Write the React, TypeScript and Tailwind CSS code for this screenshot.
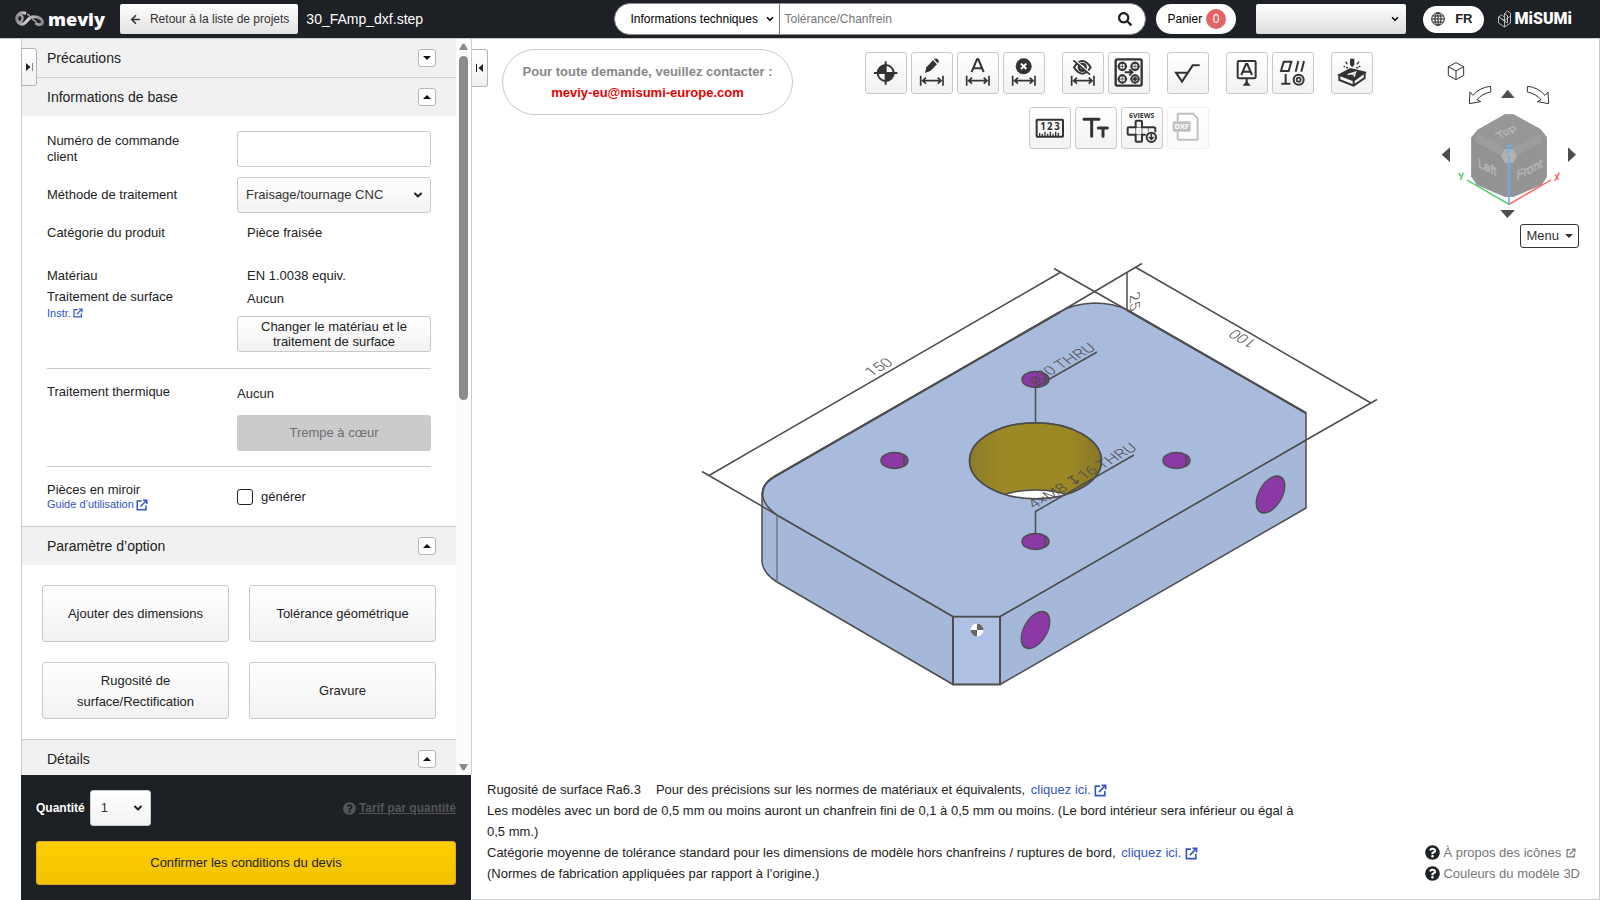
import { useState } from "react";
import type { ReactNode } from "react";
import { ArrowLeft, ChevronDown } from "lucide-react";
import { FaQuestionCircle, FaSearch } from "react-icons/fa";

const INK = "#333";

const ExternalIcon = ({ className }: { className: string }) => (
  <svg viewBox="0 0 24 24" className={className} fill="none" stroke="currentColor" strokeWidth="3" aria-hidden="true">
    <path d="M11 4H2.500V21.500H20V13" />
    <path d="M9 15L20 4" />
    <path d="M14 2.500H21.500V10" />
  </svg>
);

const MeviyLogo = () => (
  <a href="#home" className="flex items-center gap-1 text-white">
    <svg width="29" height="16" viewBox="0 0 29 16" fill="none" aria-hidden="true">
      <defs>
        <linearGradient id="swirl" x1="0" y1="0" x2="1" y2="0">
          <stop offset="0" stopColor="#8f8a8d" />
          <stop offset="0.4" stopColor="#d8d4d6" />
          <stop offset="1" stopColor="#8c8789" />
        </linearGradient>
      </defs>
      <path
        d="M11 2.500C6 .5 1.500 3.500 1.800 8C2 12 6.500 14.500 9.500 12.200C13 9.500 14 5.500 19 5.800C24 5.800 28 8.500 27.400 11.500C26.800 14.500 22.500 14 20.500 12"
        stroke="url(#swirl)"
        strokeWidth="3"
      />
      <path d="M4 4.500C6 3 8 5 7.500 8C7 10.500 5 11.500 3.200 11" stroke="#a29da0" strokeWidth="2.500" />
      <path d="M12 3C15 4 17 9 21.500 11" stroke="#aaa5a8" strokeWidth="1.500" />
    </svg>
    <span className="font-['Open_Sans',sans-serif] text-lg leading-6 font-extrabold">meviy</span>
  </a>
);

const Header = () => (
  <header className="flex h-[39px] shrink-0 items-center border-b border-[#c9cbd0] bg-[#1d2025] pr-7 pl-[15px] text-xs">
    <MeviyLogo />
    <button className="ml-[15px] flex h-[30px] items-center gap-2 rounded-[2px] bg-linear-to-b from-white to-[#e2e2e2] px-[9px] text-[#333]">
      <ArrowLeft size={13} strokeWidth={3} />
      Retour à la liste de projets
    </button>
    <span className="ml-2 text-sm text-white">30_FAmp_dxf.step</span>

    <form className="ml-auto flex h-8 w-[532px] items-center rounded-full border border-[#8a8a8a] bg-white" role="search">
      <div className="relative h-full border-r border-[#777]">
        <select aria-label="Type de recherche" className="h-full appearance-none rounded-l-full pr-[21px] pl-[15px] text-black">
          <option>Informations techniques</option>
        </select>
        <ChevronDown size={10} strokeWidth={4} className="pointer-events-none absolute top-1/2 right-1 -translate-y-1/2" />
      </div>
      <input
        aria-label="Rechercher"
        placeholder="Tolérance/Chanfrein"
        className="h-full min-w-0 flex-1 px-1 text-xs outline-none placeholder:text-[#757575]"
      />
      <button type="button" aria-label="Lancer la recherche" className="pr-[13px] pl-2 text-[#222]">
        <FaSearch size={14} />
      </button>
    </form>
    <a href="#panier" className="ml-2.5 flex h-[30px] items-center gap-1 rounded-full bg-white pr-2.5 pl-[11px] text-black">
      Panier
      <span className="flex size-5 items-center justify-center rounded-full bg-[#e06464] text-white">0</span>
    </a>
    <div className="relative ml-5 w-[150px]">
      <select aria-label="Compte" className="h-[30px] w-full appearance-none rounded-[2px] bg-linear-to-b from-white to-[#dcdcdc] px-2">
        <option></option>
      </select>
      <ChevronDown size={10} strokeWidth={4} className="pointer-events-none absolute top-1/2 right-1.5 -translate-y-1/2" />
    </div>
    <button className="ml-[17px] flex h-[27px] items-center gap-2.5 rounded-full bg-white pr-[11px] pl-2 text-[13px] font-bold text-[#222]">
      <svg width="14" height="14" viewBox="0 0 14 14" fill="none" stroke="#222" aria-hidden="true">
        <circle cx="7" cy="7" r="6.300" />
        <ellipse cx="7" cy="7" rx="3" ry="6.300" />
        <path d="M7 1V13M1 7H13M1.800 4H12.200M1.800 10H12.200" />
      </svg>
      FR
    </button>
    <a href="#misumi" className="ml-3.5 flex items-center gap-1 text-white">
      <svg width="13" height="18" viewBox="0 0 13 18" fill="none" stroke="#ddd" strokeWidth="0.8" aria-hidden="true">
        <path d="M6.500 17L.5 13V7L6.500 10.500ZM6.500 17L12.500 13V3L9.500 1L6.500 3.500V10.500L12.500 6M.5 7L3.500 5L6.500 7M6.500 3.500L9.500 5.500V13L3.500 9" />
      </svg>
      <span className="font-[Roboto,sans-serif] text-base leading-5 font-black">MiSUMi</span>
    </a>
  </header>
);

type SectionProps = { title: string; open?: boolean; border?: boolean };

const SectionHeader = ({ title, open = true, border = true }: SectionProps) => (
  <div className={border ? "border-t border-[#cbccd0]" : ""}>
    <h2 className="flex h-[38px] items-center justify-between bg-[#f1f1f1] pr-5 pl-[25px] text-sm text-[#222]">
      {title}
      <button
        aria-label={title}
        aria-expanded={open}
        className="flex size-[18px] items-center justify-center rounded-[3px] border border-[#b5b5b5] bg-white"
      >
        <svg width="8" height="4" viewBox="0 0 8 4" fill="#111" aria-hidden="true">
          <path d={open ? "M0 4L4 0L8 4Z" : "M0 0H8L4 4Z"} />
        </svg>
      </button>
    </h2>
  </div>
);

const buttonStyle = "rounded-[3px] border border-[#c8c9cd] bg-linear-to-b from-white to-[#f2f2f2]";

const optionButtons = ["Ajouter des dimensions", "Tolérance géométrique", "Rugosité de surface/Rectification", "Gravure"];

const BasicInfo = () => {
  const [mirror, setMirror] = useState(false);
  return (
    <div className="px-[25px] pt-[15px] pb-3.5 leading-4">
      <div className="grid grid-cols-[190px_1fr] items-center">
        <label htmlFor="order" className="w-36">
          Numéro de commande client
        </label>
        <input id="order" className="h-9 w-full rounded-[3px] border border-[#c8c8c8] bg-white px-2" />
      </div>
      <div className="mt-2.5 grid grid-cols-[190px_1fr] items-center">
        <label htmlFor="method">Méthode de traitement</label>
        <div className="relative">
          <select id="method" className={`h-9 w-full appearance-none pl-2 text-[#333] ${buttonStyle}`}>
            <option>Fraisage/tournage CNC</option>
          </select>
          <ChevronDown size={12} strokeWidth={4} className="pointer-events-none absolute top-3 right-[7px]" />
        </div>
      </div>
      <div className="mt-3 grid grid-cols-[200px_1fr]">
        <span>Catégorie du produit</span>
        <span>Pièce fraisée</span>
      </div>
      <div className="mt-[27px] grid grid-cols-[200px_1fr]">
        <span>Matériau</span>
        <span>EN 1.0038 equiv.</span>
      </div>
      <div className="mt-[5px] grid grid-cols-[190px_1fr]">
        <div>
          <p>Traitement de surface</p>
          <a href="#instr" className="flex items-center gap-0.5 text-[11px] text-[#3355c8]">
            Instr. <ExternalIcon className="size-2.5" />
          </a>
        </div>
        <div>
          <p className="pt-0.5 pl-2.5">Aucun</p>
          <button className={`mt-[9px] h-9 w-full px-4 leading-[15px] ${buttonStyle}`}>
            Changer le matériau et le traitement de surface
          </button>
        </div>
      </div>
      <hr className="mt-4 border-[#c9c9c9]" />
      <div className="mt-[15px] grid grid-cols-[190px_1fr]">
        <span>Traitement thermique</span>
        <div>
          <p className="pt-0.5">Aucun</p>
          <button disabled className="mt-[13px] h-9 w-full rounded-[3px] bg-[#cbcbcb] text-[#6b6e75]">
            Trempe à cœur
          </button>
        </div>
      </div>
      <hr className="mt-[15px] border-[#c9c9c9]" />
      <div className="mt-[15px] grid grid-cols-[190px_1fr] items-center">
        <div className="leading-[15px]">
          <p>Pièces en miroir</p>
          <a href="#guide" className="flex items-center gap-0.5 text-[11px] text-[#3355c8]">
            Guide d’utilisation <ExternalIcon className="size-3" />
          </a>
        </div>
        <label className="flex items-center gap-2">
          <input
            type="checkbox"
            checked={mirror}
            onChange={() => setMirror(!mirror)}
            className="size-4 appearance-none rounded-[3px] border border-[#222] bg-white checked:bg-[#222]"
          />
          générer
        </label>
      </div>
    </div>
  );
};

const SidePanel = () => (
  <aside className="relative flex w-[451px] shrink-0 flex-col text-[13px] text-[#222]">
    <div className="flex min-h-0 flex-1 border-x border-[#cbccd0]">
      <div className="min-w-0 flex-1 overflow-hidden">
        <SectionHeader title="Précautions" open={false} border={false} />
        <SectionHeader title="Informations de base" />
        <BasicInfo />
        <SectionHeader title="Paramètre d’option" />
        <div className="grid grid-cols-2 gap-5 p-5">
          {optionButtons.map((label) => (
            <button key={label} className={`h-[57px] px-6 leading-[21px] ${buttonStyle}`}>
              {label}
            </button>
          ))}
        </div>
        <SectionHeader title="Détails" />
      </div>
      <div className="flex w-[15px] flex-col items-center justify-between bg-[#fcfcfc] py-1" aria-hidden="true">
        <svg width="9" height="7" viewBox="0 0 9 7" fill="#8b8b8b">
          <path d="M0 7L3.500 .8H5.500L9 7Z" />
        </svg>
        <div className="mt-1.5 h-[344px] w-[9px] rounded-full bg-[#8b8b8b]" />
        <div className="flex-1" />
        <svg width="9" height="7" viewBox="0 0 9 7" fill="#8b8b8b">
          <path d="M0 0H9L5.500 6.200H3.500Z" />
        </svg>
      </div>
    </div>
    <div className="mr-px bg-[#1d2025] px-[15px] py-[15px]">
      <div className="flex items-center text-white">
        <label htmlFor="qty" className="text-xs font-bold">
          Quantité
        </label>
        <div className="relative ml-[5px]">
          <select id="qty" className={`h-9 w-[61px] appearance-none pl-2.5 text-[#333] ${buttonStyle}`}>
            <option>1</option>
          </select>
          <ChevronDown size={12} strokeWidth={4} className="pointer-events-none absolute top-3 right-[7px] text-[#222]" />
        </div>
        <a href="#tarif" className="ml-auto flex items-center gap-[3px] text-xs font-bold text-[#555]">
          <FaQuestionCircle size={13} />
          <span className="underline">Tarif par quantité</span>
        </a>
      </div>
      <button className="mt-[15px] h-11 w-full rounded-[3px] border border-[#e0a92c] bg-linear-to-b from-[#ffcf00] to-[#f2c200]">
        Confirmer les conditions du devis
      </button>
    </div>
    <button
      aria-label="Déplier le panneau"
      className="absolute top-[9px] left-0 flex h-[38px] w-4 items-center justify-center rounded-r-[3px] border border-[#b5b5b5] bg-linear-to-b from-white to-[#f2f2f2]"
    >
      <svg width="7" height="8" viewBox="0 0 7 8" aria-hidden="true">
        <path d="M0 0L4.500 4L0 8Z" fill="#222" />
        <path d="M6.500 0V8" stroke="#888" />
      </svg>
    </button>
    <button
      aria-label="Replier le panneau"
      className="absolute top-2.5 left-full flex h-[38px] w-4 items-center justify-center rounded-r-[3px] border border-l-0 border-[#b5b5b5] bg-linear-to-b from-white to-[#f2f2f2]"
    >
      <svg width="7" height="8" viewBox="0 0 7 8" aria-hidden="true">
        <path d="M7 0L2.500 4L7 8Z" fill="#222" />
        <path d="M.5 0V8" stroke="#222" />
      </svg>
    </button>
  </aside>
);

/* Double arrow shared by the dimension tools */
const DimArrow = () => (
  <path d="M29 71V101M96 71V101M35 86H90M45 77L35 86L45 95M80 77L90 86L80 95" strokeWidth="5" />
);

type Tool = { name: string; icon: ReactNode; disabled?: boolean };

const toolRows: Tool[][][] = [
  [
    [
      {
        name: "Origine",
        icon: (
          <>
            <circle cx="62" cy="63" r="24" />
            <path d="M62 28V98M27 63H97" strokeWidth="6" />
            <path d="M62 63V39A24 24 0 0 0 38 63ZM62 63V87A24 24 0 0 0 86 63Z" fill={INK} stroke="none" />
          </>
        ),
      },
      {
        name: "Modifier la cote",
        icon: (
          <>
            <path d="M42 63L46 46L66 25L78 37L58 57Z" fill={INK} stroke="none" />
            <path d="M69 22L72 20Q77 18 82 23Q85 28 82 32L80 34Z" fill={INK} stroke="none" />
            <DimArrow />
          </>
        ),
      },
      {
        name: "Cote automatique",
        icon: (
          <>
            <path d="M44 60L60 22H64L80 60M49 49H75" />
            <DimArrow />
          </>
        ),
      },
      {
        name: "Supprimer la cote",
        icon: (
          <>
            <circle cx="62" cy="43" r="24" fill={INK} stroke="none" />
            <path d="M54 35L70 51M70 35L54 51" stroke="#fff" strokeWidth="6" />
            <DimArrow />
          </>
        ),
      },
    ],
    [
      {
        name: "Masquer les cotes",
        icon: (
          <>
            <path d="M36 46Q48 27 61 27Q74 27 86 46Q74 65 61 65Q48 65 36 46Z" strokeWidth="6" />
            <circle cx="61" cy="46" r="10" strokeWidth="8" />
            <path d="M38 23L88 66" stroke="#fff" strokeWidth="4" />
            <path d="M34 25L84 68" strokeWidth="5" />
            <DimArrow />
          </>
        ),
      },
      {
        name: "Groupe de trous",
        icon: (
          <>
            <rect x="23" y="22" width="78" height="79" rx="5" strokeWidth="7" />
            <g strokeWidth="6">
              <circle cx="43" cy="43" r="11" />
              <circle cx="81" cy="43" r="11" />
              <circle cx="43" cy="81" r="11" />
              <circle cx="81" cy="81" r="11" />
            </g>
            <circle cx="81" cy="81" r="6" fill={INK} stroke="none" />
            <path d="M43 28V58M28 43H58M81 28V58M66 43H96M43 66V96M28 81H58M81 66V96M66 81H96" strokeWidth="2" />
            <path d="M50 61H72M64 52L73 61L64 70" strokeWidth="6" />
          </>
        ),
      },
    ],
    [
      {
        name: "Rugosité",
        icon: <path d="M98 40H77L45 89L27 62H62" />,
      },
    ],
    [
      {
        name: "Référence",
        icon: (
          <>
            <rect x="35" y="27" width="54" height="52" rx="4" />
            <path d="M46 69L60 36H64L78 69M50 59H74" strokeWidth="6" />
            <path d="M62 80V96" />
            <path d="M50 101L62 86L74 101Z" fill={INK} stroke="none" />
          </>
        ),
      },
      {
        name: "Tolérance géométrique",
        icon: (
          <>
            <path d="M27 57L35 29H58L50 57ZM71 59L79 27M88 59L96 27M41 66V95M28 95H55" />
            <circle cx="80" cy="83" r="15" />
            <circle cx="80" cy="83" r="6" strokeWidth="5" />
          </>
        ),
      },
    ],
    [
      {
        name: "Gravure",
        icon: (
          <>
            <path d="M57 20H70V38L63.500 46L57 38Z" fill={INK} stroke="none" />
            <path d="M49 37L44 29M42 45L38 42M78 37L84 29M84 45L88 42M51 48L45 46M76 48L82 46" strokeWidth="4" />
            <path d="M24 69L58 51L102 61L68 86Z" fill={INK} strokeWidth="5" />
            <path d="M25 69V84L68 101L101 78V61M68 86V101" strokeWidth="6" />
            <path d="M50 68L74 60L69 74M58 65L68 68" stroke="#fff" strokeWidth="4" />
          </>
        ),
      },
    ],
  ],
  [
    [
      {
        name: "Mesure",
        icon: (
          <>
            <rect x="23" y="38" width="79" height="51" rx="2" />
            <path d="M32 88V78M40 88V80M48 88V74M56 88V80M64 88V74M72 88V80M80 88V74M88 88V78" strokeWidth="4" />
            <g fontSize="29" fontWeight="bold" textAnchor="middle" fill={INK} stroke="none">
              <text x="42" y="69">1</text>
              <text x="62" y="69">2</text>
              <text x="84" y="69">3</text>
            </g>
          </>
        ),
      },
      {
        name: "Taille du texte",
        icon: <path d="M27 37H72M50 37V88M70 63H97M84 63V88" strokeWidth="9" strokeLinecap="round" />,
      },
      {
        name: "Six vues",
        icon: (
          <>
            <text x="62" y="32" textAnchor="middle" fontSize="21" fontWeight="bold" fill={INK} stroke="none">
              6VIEWS
            </text>
            <path
              d="M74 83H63V101Q63 104 60 104H47Q44 104 44 101V83H23Q20 83 20 80V64Q20 61 23 61H44V44Q44 41 47 41H60Q63 41 63 44V61H98Q103 61 103 66V76"
            />
            <path d="M44 61H63V83H44ZM82 61V74" strokeWidth="2" />
            <circle cx="91" cy="91" r="14" />
            <path d="M91 81V95M84 90L91 97L98 90" strokeWidth="5" />
          </>
        ),
      },
      {
        name: "Exporter en DXF",
        disabled: true,
        icon: (
          <>
            <path d="M32 42V24Q32 20 36 20H78L92 34V95Q92 98 88 98H36Q32 98 32 95V74" />
            <rect x="17" y="43" width="54" height="31" rx="4" fill={INK} stroke="none" />
            <text x="44" y="67" textAnchor="middle" fontSize="22" fontWeight="bold" fill="#fff" stroke="none">
              DXF
            </text>
          </>
        ),
      },
    ],
  ],
];

const Toolbar = () => (
  <div className="flex flex-1 flex-col items-center gap-[13px] pt-[13px] pl-1">
    {toolRows.map((groups, row) => (
      <div key={row} className="flex gap-[17px]">
        {groups.map((group, i) => (
          <div key={i} className="flex gap-1">
            {group.map(({ name, icon, disabled }) => (
              <button
                key={name}
                aria-label={name}
                disabled={disabled}
                className={`size-[42px] disabled:opacity-30 ${buttonStyle}`}
              >
                <svg
                  viewBox="3 3 120 120"
                  className="size-10 font-['Open_Sans',sans-serif]"
                  fill="none"
                  stroke={INK}
                  strokeWidth="6"
                >
                  {icon}
                </svg>
              </button>
            ))}
          </div>
        ))}
      </div>
    ))}
  </div>
);

const ViewCube = () => (
  <div className="flex w-[159px] flex-col items-end pt-[21px] pr-5">
    <svg width="139" height="160" viewBox="60 30 417 480" fill="none" role="img" aria-label="Orientation">
      <g stroke={INK} strokeWidth="3">
        <path d="M108 38L131 50V76L108 89L85 76V50ZM85 50L108 63L131 50M108 63V89" />
        <path d="M212 109V126Q186 131 171 149L182 155L148 161L150 126L159 136Q179 112 212 109Z" />
        <path d="M322 109V126Q348 131 363 149L352 155L386 161L384 126L375 136Q355 112 322 109Z" />
      </g>
      <path d="M243 144H284L263 119ZM241 480H285L262 504ZM65 314L90 292V336ZM468 314L444 292V336Z" fill="#4d4d4d" />
      <path
        d="M255 193H280L362 238L380 260V382L365 405L280 441H255L170 405L154 380V262L172 240Z"
        fill="#949494"
      />
      <path d="M172 240L255 193H280L362 238L365 250L279 292H255L170 250Z" fill="#979797" />
      <path d="M170 250L255 292L245 318L165 276ZM365 250L279 292L290 318L368 276Z" fill="#9d9d9d" />
      <path d="M154 262L165 276L245 320L253 340V432L170 395L154 380Z" fill="#929292" />
      <path d="M380 262L368 276L290 320L281 340V432L365 395L380 380Z" fill="#949494" />
      <path d="M255 297H279L291 318L279 339H255L243 318Z" fill="#b2b2b2" />
      <g fill="#969696" stroke="#c4c4c4" strokeWidth="1.500" fontSize="38">
        <text transform="matrix(.866 -.46 .5 .6 238 267)">Top</text>
        <text transform="matrix(.87 .45 0 1 174 350)">Left</text>
        <text transform="matrix(.87 -.42 0 1 290 389)">Front</text>
      </g>
      <g strokeWidth="4">
        <path d="M141 390L267 463" stroke="#3ccf5c" />
        <path d="M393 390L267 463" stroke="#ff5a5a" />
        <path d="M267 463V318" stroke="#6cb0f2" strokeWidth="5" />
        <path d="M260 290L273 285L261 307L274 302" stroke="#6cb0f2" />
        <path d="M116 369L123 379M130 369L121 390" stroke="#3ccf5c" />
        <path d="M405 373L416 389M418 368L404 393" stroke="#ff5a5a" />
      </g>
    </svg>
    <button className="mt-1 flex h-6 items-center gap-1.5 rounded-[3px] border border-[#333] bg-white px-[5px] text-[13px] text-[#333]">
      Menu
      <svg width="8" height="4" viewBox="0 0 8 4" fill="#333" aria-hidden="true">
        <path d="M0 0H8L4 4Z" />
      </svg>
    </button>
  </div>
);

const tappedHoles = [
  [1035, 379],
  [894, 460],
  [1176, 460],
  [1035, 541],
];

const PartModel = () => (
  <svg viewBox="472 249 1127 530" className="min-h-0 w-full flex-1" fill="none" role="img" aria-label="Modèle 3D">
    <defs>
      <linearGradient id="bore" x1="0" x2="1" y1="0" y2="0">
        <stop offset="0" stopColor="#8c7b2c" />
        <stop offset="0.25" stopColor="#9c8825" />
        <stop offset="0.75" stopColor="#9c8825" />
        <stop offset="1" stopColor="#88772b" />
      </linearGradient>
      <clipPath id="boreClip">
        <ellipse cx="1035.500" cy="460.700" rx="66" ry="38" />
      </clipPath>
    </defs>
    <g stroke="#4d4d4d" strokeWidth="1.500" strokeLinejoin="round">
      <path d="M762 493V562Q763 573 777 582L953 684.500V616.500L777 515Z" fill="#a6b8da" />
      <path d="M1000 616.500L1306 440V508L1000 684.500Z" fill="#a6b8da" />
      <path d="M953 616.500H1000V684.500H953Z" fill="#aec1e4" strokeWidth="2" />
      <path
        d="M777 515Q763 505 762.500 494C762.500 485 768 480 779 474L1060 312Q1072 304 1094 303Q1114 303 1127 310L1306 413V440L1000 616.500H953Z"
        fill="#a9bbdd"
      />
      <path d="M762.500 494C762.500 485 768 480 779 474L1060 312M1127 310L1306 413" strokeWidth="2.200" />
      <path d="M777 515V582" stroke="#6f7683" />
      <path d="M702 471.500L777 515M709 475.500L1061 272M1054 268.500L1127 310M1142 263.500L1060 312" />
      <path d="M1136 267.500L1371 403M1377 399.500L1306 440M1127 272V310" />
      <path d="M1035.500 387V423" />
      <ellipse cx="1035.500" cy="460.700" rx="66" ry="38" fill="url(#bore)" />
      <g clipPath="url(#boreClip)">
        <ellipse cx="1035.500" cy="528" rx="66" ry="38" fill="#fff" />
      </g>
      <ellipse cx="1035.500" cy="460.700" rx="66" ry="38" />
      {tappedHoles.map(([x, y]) => (
        <g key={`${x}-${y}`}>
          <ellipse cx={x + 0.5} cy={y + 0.5} rx="13.500" ry="8" fill="#8b39a5" />
          <path d={`M${x + 10} ${y - 5}V${y + 6}`} />
        </g>
      ))}
      <g fill="#8b39a5">
        <circle r="16.500" transform="matrix(.866 -.5 0 1 1270.500 494.500)" />
        <circle r="16.500" transform="matrix(.866 -.5 0 1 1035.500 630)" />
      </g>
      <path d="M1035.500 387L1097 352M1035.500 534V511.500L1134 455" />
    </g>
    <g fill="#4d4d4d" fontSize="16" className="font-[Roboto,sans-serif] font-light">
      <text transform="matrix(.866 -.5 .7 .6 871 377)">150</text>
      <text transform="matrix(.866 -.5 .7 .6 1034 385)">⌀30 THRU</text>
      <text transform="matrix(.866 -.5 .7 .6 1034 509)">4×M8 ↧16 THRU</text>
      <text transform="matrix(-.866 -.5 .7 -.6 1258 342)">100</text>
      <text transform="matrix(0 1 -.866 .4 1130 295)">25</text>
    </g>
    <circle cx="977" cy="630" r="6.500" fill="#fff" />
    <path d="M977 630V623.500A6.500 6.500 0 0 1 983.500 630ZM977 630V636.500A6.500 6.500 0 0 1 970.500 630Z" fill="#666" />
  </svg>
);

const InlineLink = () => (
  <a href="#normes" className="ml-0.5 text-[#3355c8]">
    cliquez ici. <ExternalIcon className="inline size-[13px]" />
  </a>
);

const Notes = () => (
  <footer className="flex items-end justify-between pr-[19px] pb-[15px] pl-[15px] text-[13px] leading-[21px] text-[#222]">
    <div className="max-w-[820px]">
      <p>
        <span className="mr-[15px]">Rugosité de surface Ra6.3</span>
        Pour des précisions sur les normes de matériaux et équivalents, <InlineLink />
      </p>
      <p>
        Les modèles avec un bord de 0,5 mm ou moins auront un chanfrein fini de 0,1 à 0,5 mm ou moins. (Le bord
        intérieur sera inférieur ou égal à 0,5 mm.)
      </p>
      <p>
        Catégorie moyenne de tolérance standard pour les dimensions de modèle hors chanfreins / ruptures de bord,{" "}
        <InlineLink />
      </p>
      <p>(Normes de fabrication appliquées par rapport à l’origine.)</p>
    </div>
    <ul className="text-[#777]">
      <li>
        <a href="#icones" className="flex items-center gap-[3px]">
          <FaQuestionCircle size={15} className="text-[#1d2025]" />À propos des icônes
          <ExternalIcon className="ml-0.5 size-2.5" />
        </a>
      </li>
      <li>
        <a href="#couleurs" className="flex items-center gap-[3px]">
          <FaQuestionCircle size={15} className="text-[#1d2025]" />
          Couleurs du modèle 3D
        </a>
      </li>
    </ul>
  </footer>
);

const App = () => (
  <div className="flex h-screen flex-col bg-white font-['Liberation_Sans',Arial,sans-serif]">
    <Header />
    <div className="flex min-h-0 flex-1 pl-[21px]">
      <SidePanel />
      <main className="flex min-w-0 flex-1 flex-col border-r border-b border-[#cbccd0]">
        <div className="flex h-[210px] shrink-0 items-start">
          <p className="mt-2.5 ml-[30px] flex h-[66px] w-[291px] flex-col justify-center rounded-full border border-[#c8c8c8] text-center text-[13px] leading-[21px] font-bold text-[#888]">
            Pour toute demande, veuillez contacter :
            <a href="mailto:meviy-eu@misumi-europe.com" className="text-[#e60000]">
              meviy-eu@misumi-europe.com
            </a>
          </p>
          <Toolbar />
          <ViewCube />
        </div>
        <PartModel />
        <Notes />
      </main>
    </div>
  </div>
);

export default App;
